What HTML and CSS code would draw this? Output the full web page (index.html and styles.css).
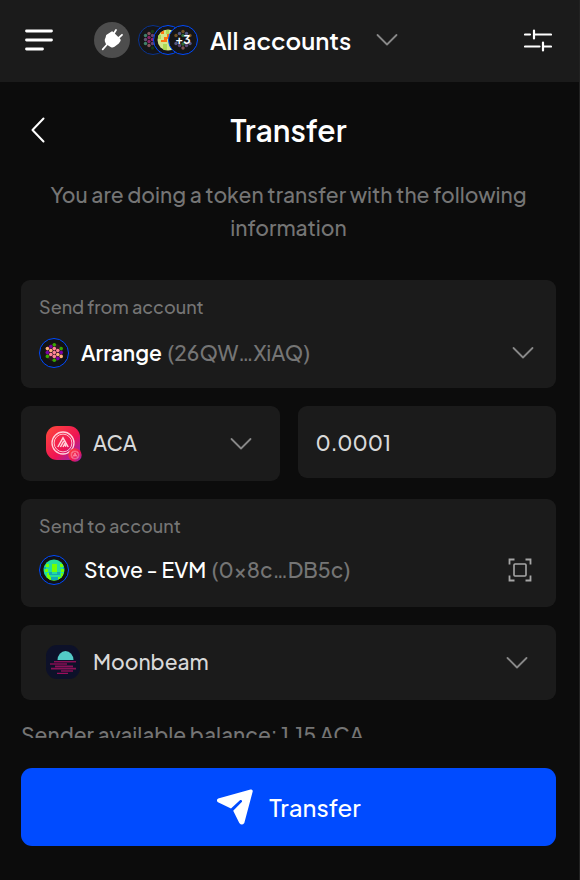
FILE: index.html
```html
<!DOCTYPE html>
<html lang="en">
<head>
<meta charset="utf-8">
<meta name="viewport" content="width=device-width, initial-scale=1">
<title>Transfer</title>
<link rel="stylesheet" href="styles.css">
</head>
<body>
<svg class="defs" aria-hidden="true">
  <defs>
    <linearGradient id="acala" x1="0" y1="0" x2="1" y2="1">
      <stop offset="0" stop-color="#ff4b3a"/><stop offset=".6" stop-color="#ee1354"/><stop offset="1" stop-color="#7a2fd0"/>
    </linearGradient>
    <clipPath id="face"><circle cx="15" cy="15" r="10.5"/></clipPath>
    <symbol id="chevron" viewBox="0 0 22 14"><path d="M1.5 2 11 11.5 20.5 2" fill="none" stroke="currentColor" stroke-width="1.8" stroke-linecap="round" stroke-linejoin="round"/></symbol>
    <symbol id="aca-mark" viewBox="0 0 24 24">
      <g fill="none" stroke="#ffd3dc"><circle cx="12" cy="12" r="11" stroke-width="1.3"/><circle cx="12" cy="12" r="8.9" stroke-width=".9"/>
      <path d="M6.8 16 12 6.8 17.2 16M9.4 16l3.3-5.8M12 16l1.7-3 1.2 2.6" stroke-width="1.5"/></g>
    </symbol>
  </defs>
</svg>
<div class="app">
  <header class="topbar">
    <button class="icon-button" type="button" aria-label="Menu">
      <svg width="28" height="24" viewBox="0 0 28 24"><path d="M1.5 3h25M1.5 12h25M1.5 21h16" stroke="#fff" stroke-width="2.8" stroke-linecap="round"/></svg>
    </button>
    <button class="plug" type="button" aria-label="Connections">
      <svg width="36" height="36" viewBox="0 0 36 36"><path d="M17.2 9.7Q18 8.8 19 9.7L26.3 17Q27 18 26.5 19L24.8 21.5 20.5 24.8Q18.5 26.2 17 25.2L13.8 23.2 11.8 21.8 10.8 19.3Q10.4 17.5 11.5 15.8L12.2 13Z" fill="#fff"/><path d="M19.5 12 22 8M24 16.5 28 12.8" stroke="#fff" stroke-width="1.8" stroke-linecap="round"/><path d="M13 22.5 8.7 27.3" stroke="#fff" stroke-width="1.8" stroke-linecap="round"/></svg>
    </button>
    <button class="accounts" type="button">
      <svg width="60" height="30" viewBox="0 0 60 30" aria-hidden="true">
        <circle cx="15" cy="15" r="14.5" fill="#151517" stroke="#0b3490"/>
        <g fill="#87575d"><circle cx="11" cy="8.5" r="1.7"/><circle cx="11" cy="16.5" r="1.7" fill="#8c2367"/><circle cx="11" cy="12.5" r="1.7" fill="#8c2367"/><circle cx="11" cy="20.5" r="1.7"/><circle cx="7.5" cy="10.5" r="1.7" fill="#408069"/><circle cx="7.5" cy="14.5" r="1.7" fill="#665073"/><circle cx="7.5" cy="18.5" r="1.7" fill="#408069"/><circle cx="14.5" cy="6.5" r="1.7" fill="#153b15"/><circle cx="14.5" cy="10.5" r="1.7" fill="#68446e"/><circle cx="14.5" cy="14.5" r="1.7" fill="#942574"/><circle cx="14.5" cy="18.5" r="1.7" fill="#68446e"/><circle cx="14.5" cy="23" r="1.7" fill="#153b15"/></g>
        <circle cx="30" cy="15" r="14.5" fill="#151517" stroke="#004bff"/>
        <g clip-path="url(#face)" transform="translate(15 0)"><path fill="#d3e78a" d="M4 4h22v22H4z"/><path fill="#ff7410" d="M8 6h3v3H8zM11 12h6v2h-3v3H8v-2h3zM14 9h2v3h-2z"/><path fill="#addb55" d="M5 10h3v4H5zM10 19h4v6h-4zM13 5h3v4h-3z"/></g>
        <circle cx="45" cy="15" r="14.5" fill="#151517" stroke="#004bff"/>
        <g fill="#555985"><circle cx="45" cy="6.5" r="1.7" fill="#6e5025"/><circle cx="41.5" cy="8.5" r="1.7"/><circle cx="48.5" cy="8.5" r="1.7"/><circle cx="38" cy="10.5" r="1.7" fill="#6e5025"/><circle cx="52" cy="10.5" r="1.7" fill="#6e5025"/><circle cx="45" cy="10.5" r="1.7" fill="#356c32"/><circle cx="38" cy="18.5" r="1.7"/><circle cx="52" cy="18.5" r="1.7"/><circle cx="41.5" cy="20.5" r="1.7" fill="#594774"/><circle cx="48.5" cy="20.5" r="1.7" fill="#594774"/><circle cx="45" cy="19" r="1.7" fill="#356c32"/><circle cx="45" cy="23" r="1.7" fill="#805254"/></g>
        <text class="more" x="45" y="19" text-anchor="middle">+3</text>
      </svg>
      <span class="accounts-name">All accounts</span>
      <svg class="chevron" width="22" height="14"><use href="#chevron"/></svg>
    </button>
    <button class="icon-button filter" type="button" aria-label="Settings">
      <svg width="28" height="24" viewBox="0 0 28 24"><path d="M1 6.5h5M10 6.5h17M10 2.5v8M1 18.5h14.5M19 14.5v8M19 18.5h8" stroke="#fff" stroke-width="2.2" stroke-linecap="round" fill="none"/></svg>
    </button>
  </header>

  <main class="content">
    <div class="heading">
      <button class="icon-button" type="button" aria-label="Back">
        <svg width="14" height="26" viewBox="0 0 14 26"><path d="M12.5 1.5 1.5 13l11 11.5" fill="none" stroke="#fff" stroke-width="2" stroke-linecap="round" stroke-linejoin="round"/></svg>
      </button>
      <h1>Transfer</h1>
    </div>
    <p class="intro">You are doing a token transfer with the following information</p>

    <form class="form" id="transfer">
      <div class="card account">
        <span class="label" id="from-label">Send from account</span>
        <button class="account-row" type="button" aria-labelledby="from-label from-value">
          <svg width="30" height="30" viewBox="0 0 30 30" aria-hidden="true">
            <circle cx="15" cy="15" r="14.5" fill="#121214" stroke="#004bff"/>
            <circle cx="15.3" cy="14.5" r="9" fill="#321323"/>
            <g fill="#ff8397"><circle cx="15.3" cy="10.6" r="1.8"/><circle cx="15.3" cy="14.5" r="1.8"/><circle cx="15.3" cy="18.4" r="1.8"/><circle cx="11.8" cy="16.5" r="1.8"/><circle cx="18.8" cy="12.5" r="1.8"/></g>
            <g fill="#37a800"><circle cx="15.3" cy="6.7" r="1.8"/><circle cx="15.3" cy="22.3" r="1.8"/><circle cx="8.4" cy="18.4" r="1.8"/><circle cx="22.2" cy="10.6" r="1.8"/></g>
            <g fill="#ffb078"><circle cx="8.4" cy="10.6" r="1.8"/><circle cx="11.8" cy="12.5" r="1.8"/><circle cx="18.8" cy="16.5" r="1.8"/><circle cx="22.2" cy="18.4" r="1.8"/></g>
            <g fill="#7b00a8"><circle cx="11.8" cy="8.6" r="1.8"/><circle cx="8.4" cy="14.5" r="1.8"/><circle cx="22.2" cy="14.5" r="1.8"/><circle cx="18.8" cy="20.4" r="1.8"/></g>
          </svg>
          <span class="account-name" id="from-value"><strong>Arrange</strong> <span>(26QW…XiAQ)</span></span>
          <svg class="chevron" width="22" height="14"><use href="#chevron"/></svg>
        </button>
      </div>

      <div class="pair">
        <div class="card picker">
          <svg width="36" height="36" viewBox="0 0 36 36" aria-hidden="true">
            <rect width="34" height="34" rx="11" fill="url(#acala)"/><use href="#aca-mark" x="5" y="5" width="24" height="24"/>
            <circle cx="29" cy="29" r="6.7" fill="url(#acala)"/><use href="#aca-mark" x="24.5" y="24.5" width="9" height="9"/>
          </svg>
          <select aria-label="Token"><option>ACA</option></select>
          <svg class="chevron" width="22" height="14"><use href="#chevron"/></svg>
        </div>
        <input class="card amount" type="text" inputmode="decimal" aria-label="Amount" value="0.0001">
      </div>

      <div class="card account">
        <span class="label" id="to-label">Send to account</span>
        <div class="account-row recipient">
          <svg width="30" height="30" viewBox="0 0 30 30" aria-hidden="true">
            <circle cx="15" cy="15" r="14.5" fill="#121214" stroke="#004bff"/>
            <g clip-path="url(#face)"><path fill="#24df9b" d="M4 4h23v23H4z"/><path fill="#76ff00" d="M13 9h5v8h-5zM7 9h3v3H7zM21 9h3v3h-3zM6 14h3v3H6zM22 14h3v3h-3zM8 18h3v4h11v-4h2v4l-2 4H10l-2-4z"/><path fill="#12a9b7" d="M10 17h3v2h5v-2h3v3H10zM12 22h7v3h-7zM4 12h3v2H4zM24 12h3v2h-3z"/></g>
          </svg>
          <button class="address" type="button" aria-labelledby="to-label to-value"><span class="account-name" id="to-value"><b>Stove - EVM</b> <span>(0×8c…DB5c)</span></span></button>
          <button class="icon-button scan" type="button" aria-label="Scan QR code">
            <svg width="24" height="24" viewBox="0 0 24 24"><path d="M1.5 6.5v-5h5M17.5 1.5h5v5M22.5 17.5v5h-5M6.5 22.5h-5v-5" fill="none" stroke="#a6a6a6" stroke-width="1.8"/><rect x="6" y="6" width="12" height="12" rx="1" fill="none" stroke="#a6a6a6" stroke-width="1.6"/></svg>
          </button>
        </div>
      </div>

      <div class="card picker">
        <svg width="36" height="36" viewBox="0 0 36 36" aria-hidden="true">
          <rect width="34" height="34" rx="11" fill="#0d1129"/><path d="M11.5 15a8 9 0 0 1 16 0z" fill="#53cbc8"/>
          <path d="M8 16.8h22M4 19h17M15 26h12M11 28.3h11" stroke="#c20d69" stroke-width="1"/><path d="M9 21.4h18M5 23.6h25" stroke="#8a1157" stroke-width="1.9"/>
        </svg>
        <select aria-label="Destination chain"><option>Moonbeam</option></select>
        <svg class="chevron" width="22" height="14"><use href="#chevron"/></svg>
      </div>
      <p class="balance">Sender available balance: 1.15 ACA</p>
    </form>
  </main>

  <footer class="footer">
    <button class="submit" type="submit" form="transfer">
      <svg width="38" height="38" viewBox="0 0 38 38" aria-hidden="true"><path d="M2.2 10.6 34.5 1.5Q37 1 36.7 3.5L28.3 35Q25.8 38.2 23.3 35L17.2 22.8 26 13.8Q26.5 11.7 24.2 12L15 20.4 2 14.3Q-.2 12.2 2.2 10.6Z" fill="#fff"/></svg>
      <span>Transfer</span>
    </button>
  </footer>
</div>
</body>
</html>
```
FILE: styles.css
```css
* { box-sizing: border-box; }

body {
  margin: 0;
  background: #0c0c0c;
  color: #fff;
  font-family: "Plus Jakarta Sans", Inter, "Open Sans", sans-serif;
  font-weight: 500;
}

button, input, select {
  padding: 0;
  border: 0;
  background: none;
  color: inherit;
  font: inherit;
  cursor: pointer;
}

svg { display: block; flex: none; }
.defs { position: absolute; width: 0; height: 0; }

.app {
  display: flex;
  flex-direction: column;
  height: 100vh;
  border-right: 1px solid #222;
}

.topbar {
  display: flex;
  align-items: center;
  flex: none;
  height: 82px;
  padding: 0 27px 2px 25px;
  background: #1b1b1b;
}

.plug {
  margin-left: 41px;
  border-radius: 50%;
  background: #4d4d4d;
}

.accounts {
  display: flex;
  align-items: center;
  margin-left: 8px;
}

.accounts-name {
  margin: 0 25px 0 12px;
  font-size: 24px;
  font-weight: 600;
  line-height: 36px;
}

.more {
  fill: #fff;
  font-size: 12px;
  font-weight: 700;
}

.chevron { color: #888; }
.filter { margin-left: auto; }

.content {
  display: flex;
  flex-direction: column;
  flex: 1;
  min-height: 0;
  padding: 0 23px 0 21px;
}

.heading {
  display: grid;
  grid-template-columns: 34px 1fr 34px;
  align-items: center;
  height: 96px;
}

.heading .icon-button { padding-left: 10px; }

h1 {
  margin: 0;
  font-size: 30px;
  font-weight: 600;
  line-height: 40px;
  text-align: center;
}

.intro {
  margin: 0;
  padding: 0 20px;
  color: #757575;
  font-size: 21px;
  line-height: 33px;
  text-align: center;
}

.form {
  display: flex;
  flex-direction: column;
  flex: 1;
  gap: 18px;
  min-height: 0;
  margin-top: 36px;
  overflow: hidden;
}

.card {
  flex: none;
  border-radius: 9px;
  background: #1b1b1b;
}

.account {
  height: 108px;
  padding: 14px 18px;
}

.label {
  display: block;
  color: #757575;
  font-size: 18px;
  line-height: 26px;
}

.account-row {
  display: flex;
  align-items: center;
  width: 100%;
  margin-top: 16px;
  padding-right: 4px;
  gap: 12px;
  text-align: left;
}

.recipient {
  margin-top: 14px;
  padding-right: 6px;
  gap: 15px;
}

.account-name {
  color: #757575;
  font-size: 21px;
  line-height: 34px;
}

.account-name span { margin-left: 2px; }

.account-name strong, .account-name b {
  color: #fff;
  font-weight: 600;
}

.account-name b { font-weight: 500; }
.account-row .chevron, .scan { margin-left: auto; }

.pair {
  display: grid;
  grid-template-columns: 1fr 1fr;
  align-items: start;
  flex: none;
  gap: 18px;
}

.picker {
  display: flex;
  align-items: center;
  height: 75px;
  padding: 0 28px 0 25px;
  gap: 11px;
}

.picker select {
  flex: 1;
  min-width: 0;
  padding-bottom: 2px;
  color: #d9d9d9;
  font-size: 21px;
  line-height: 34px;
  appearance: none;
}

.amount {
  width: 100%;
  min-width: 0;
  height: 72px;
  padding: 0 18px;
  color: #d9d9d9;
  font-size: 21px;
  cursor: text;
}

.balance {
  flex: none;
  margin: 0;
  color: #757575;
  font-size: 21px;
  line-height: 34px;
}

.footer {
  flex: none;
  padding: 30px 23px 34px 21px;
}

.submit {
  display: flex;
  align-items: center;
  justify-content: center;
  width: 100%;
  height: 78px;
  gap: 15px;
  border-radius: 11px;
  background: #004bff;
  font-size: 24px;
}
```
